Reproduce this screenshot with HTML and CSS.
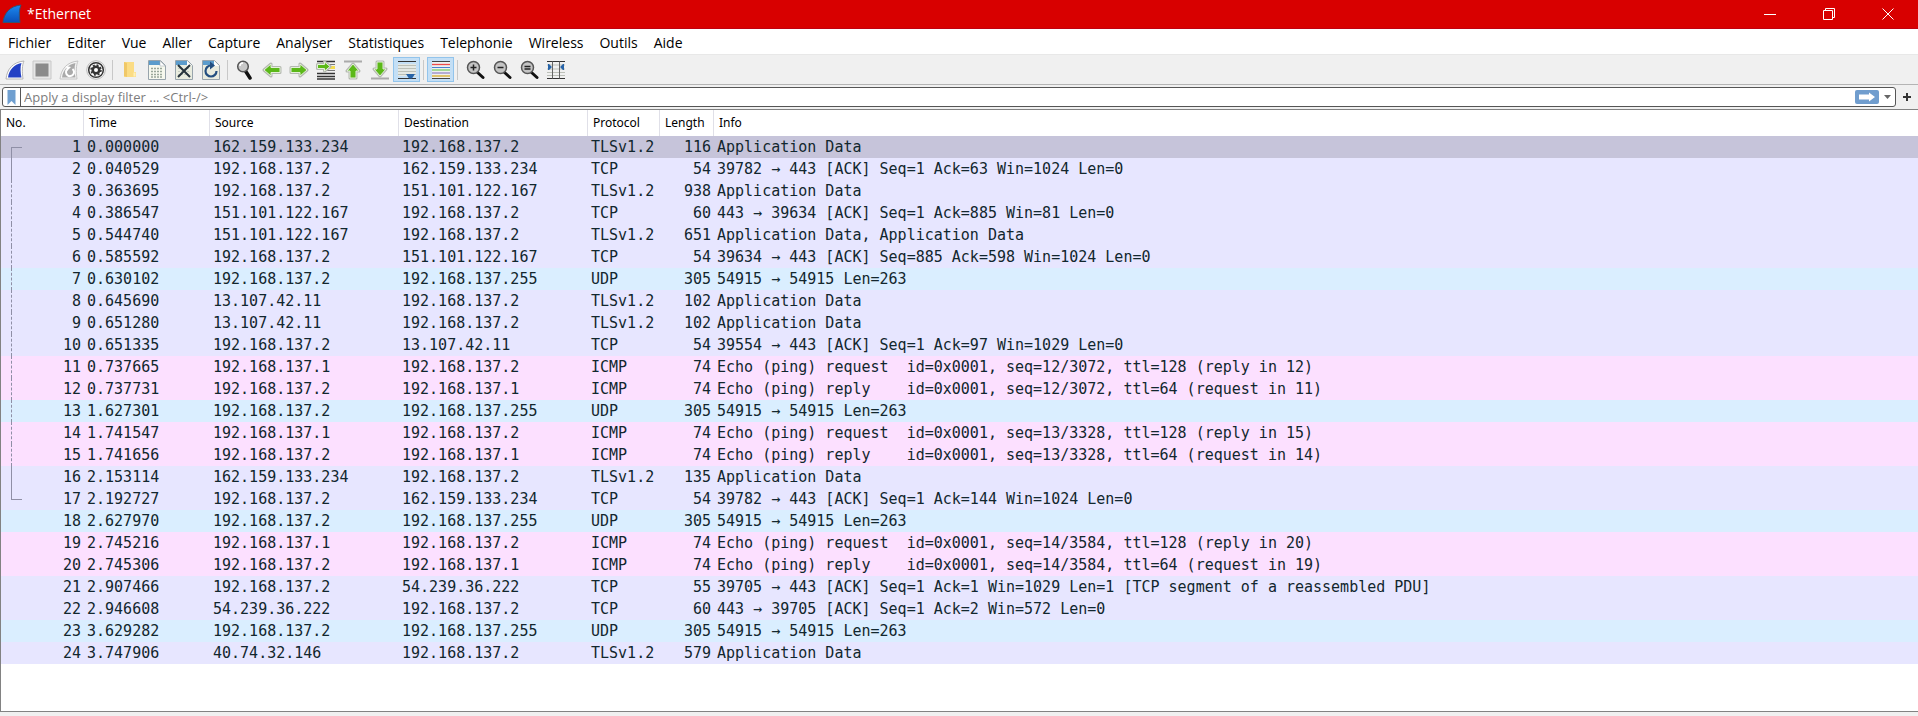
FILE: index.html
```html
<!DOCTYPE html>
<html lang="fr">
<head>
<meta charset="utf-8">
<title>*Ethernet</title>
<link rel="stylesheet" href="styles.css">
</head>
<body>
<div class="window">
<header class="titlebar">
  <svg class="app-icon" viewBox="0 0 20 20"><defs><linearGradient id="fin" x1="0" y1="0" x2="0" y2="1"><stop offset="0" stop-color="#1c8af0"/><stop offset="1" stop-color="#0a4fb8"/></linearGradient></defs><path d="M1 18.500C2 9 8 2 19 1c-2 4-2 11-1 17.500z" fill="url(#fin)" stroke="#39506e"/></svg>
  <h1 class="caption">*Ethernet</h1>
  <div class="win-buttons">
    <button class="win-button" aria-label="Réduire"><svg viewBox="0 0 14 14"><path d="M1 7.500h12"/></svg></button>
    <button class="win-button" aria-label="Restaurer"><svg viewBox="0 0 14 14"><path d="M1.500 3.500h9v9h-9zM3.500 3.500v-2h9v9h-2"/></svg></button>
    <button class="win-button" aria-label="Fermer"><svg viewBox="0 0 14 14"><path d="M1.500 1.500l11 11M12.500 1.500l-11 11"/></svg></button>
  </div>
</header>
<nav class="menubar">
  <button>Fichier</button><button>Editer</button><button>Vue</button><button>Aller</button><button>Capture</button><button>Analyser</button><button>Statistiques</button><button>Telephonie</button><button>Wireless</button><button>Outils</button><button>Aide</button>
</nav>
<div class="toolbar" role="toolbar">
  <button class="tool" aria-label="Démarrer"><svg viewBox="0 0 20 20"><path d="M1 19C2 9 8 2 19 1c-2 4-2 11-1 18z" fill="#fff" stroke="#b4b4b4"/><path d="M3 17.500C4 10 9 4.500 16.500 3c-1.500 4-1 10 0 14.500z" fill="#2340c4"/></svg></button>
  <button class="tool" aria-label="Arrêter"><svg viewBox="0 0 20 20"><path d="M1 1h18v18H1z" fill="#e6e6e6" stroke="#c8c8c8"/><path d="M3.500 3.500h13v13h-13z" fill="#8b8b8b"/></svg></button>
  <button class="tool" aria-label="Redémarrer"><svg viewBox="0 0 20 20"><path d="M1 19C2 9 8 2 19 1c-2 4-2 11-1 18z" fill="#f4f4f4" stroke="#c4c4c4"/><path d="M3 17.500C4 10 9 4.500 16.500 3c-1.500 4-1 10 0 14.500z" fill="#aaa"/><path d="M8 9.500a4 4 0 1 0 5.500-.5" fill="none" stroke="#fff" stroke-width="2"/><path d="M7 6l5 1-4 4z" fill="#fff"/></svg></button>
  <button class="tool" aria-label="Options"><svg viewBox="0 0 20 20"><circle cx="10" cy="10" r="9.300" fill="#f5f5f5" stroke="#bbb"/><circle cx="10" cy="10" r="7.300" fill="#fff" stroke="#333" stroke-width="1.500"/><circle cx="10" cy="10" r="5" fill="none" stroke="#333" stroke-width="1.500" stroke-dasharray="2 1.930"/><circle cx="10" cy="10" r="3.300" fill="#fff" stroke="#333" stroke-width="2.600"/></svg></button>
  <span class="separator"></span>
  <button class="tool" aria-label="Ouvrir"><svg viewBox="0 0 20 20"><path d="M4 2h10v10h2v5H4z" fill="#fbdc84"/><path d="M4 2l3 1v14l-3-1z" fill="#f0c868"/><path d="M13.500 12.500h2v4h-2z" fill="#fff0b8"/></svg></button>
  <button class="tool" aria-label="Enregistrer"><svg viewBox="0 0 20 20"><path d="M1.500.500h12l5 5v14h-17z" fill="#f6f8ee" stroke="#98a4ac"/><path d="M2 1h11v4H2z" fill="#5b9ccc"/><path d="M13 1v5h5z" fill="#fff" stroke="#98a4ac" stroke-width=".5"/><path d="M4 8.500h12M4 11.500h12M4 14.500h12M4 17h12" stroke="#9aa79a" stroke-width="1.500" stroke-dasharray="2 1"/></svg></button>
  <button class="tool" aria-label="Fermer le fichier"><svg viewBox="0 0 20 20"><path d="M1.500.500h12l5 5v14h-17z" fill="#e9ecdf" stroke="#98a4ac"/><path d="M2 1h11v4H2z" fill="#5b9ccc"/><path d="M13 1v5h5z" fill="#fff"/><path d="M4 8.500h12M4 11.500h12M4 14.500h12" stroke="#c4ccc0" stroke-dasharray="2 1"/><path d="M4 5l12 12M16 5l-12 12" stroke="#26333c" stroke-width="2"/></svg></button>
  <button class="tool" aria-label="Recharger"><svg viewBox="0 0 20 20"><path d="M1.500.500h12l5 5v14h-17z" fill="#e9ecdf" stroke="#98a4ac"/><path d="M2 1h11v4H2z" fill="#5b9ccc"/><path d="M13 1v5h5z" fill="#fff"/><path d="M15.500 11a5.500 5.500 0 1 1-5.500-5.500" fill="none" stroke="#234f80" stroke-width="2.200"/><path d="M9 1.500l5 4-5 4z" fill="#234f80"/></svg></button>
  <span class="separator"></span>
  <button class="tool" aria-label="Rechercher"><svg viewBox="0 0 20 20"><path d="M10.500 11l4.500 7" stroke="#111" stroke-width="3.500" stroke-linecap="round"/><circle cx="8" cy="6.500" r="5.300" fill="#c8c8c8" stroke="#555" stroke-width="1.500"/><path d="M5 6a3 3 0 0 1 3-3" stroke="#fff" stroke-width="1.500" fill="none"/></svg></button>
  <button class="tool" aria-label="Précédent"><svg viewBox="0 0 20 20"><path class="arrow-rim" d="M2 10l7-6v3.500h9v5H9V16z"/><path class="arrow" d="M2 10l7-6v3.500h9v5H9V16z"/></svg></button>
  <button class="tool" aria-label="Suivant"><svg viewBox="0 0 20 20"><path class="arrow-rim" d="M18 10l-7-6v3.500H2v5h9V16z"/><path class="arrow" d="M18 10l-7-6v3.500H2v5h9V16z"/></svg></button>
  <button class="tool" aria-label="Aller au paquet"><svg viewBox="0 0 20 20"><path d="M1 1.500h18M1 13.500h18M1 16.500h18M1 19h18" stroke="#333" stroke-width="1.300"/><path d="M10 4.500h9M10 10.500h9" stroke="#777"/><path d="M13 6h6v3h-6z" fill="#f3dc50"/><path class="arrow-rim" d="M14 6.500L8.500 2v2.500h-7v4h7V11z"/><path class="arrow" d="M14 6.500L8.500 2v2.500h-7v4h7V11z"/></svg></button>
  <button class="tool" aria-label="Premier paquet"><svg viewBox="0 0 20 20"><path d="M1 1.500h18" stroke="#aaa" stroke-width="2"/><path class="arrow-rim" d="M10 4l6 7h-3v7H7v-7H4z"/><path class="arrow" d="M10 4l6 7h-3v7H7v-7H4z"/></svg></button>
  <button class="tool" aria-label="Dernier paquet"><svg viewBox="0 0 20 20"><path d="M1 18.500h18" stroke="#aaa" stroke-width="2"/><path class="arrow-rim" d="M10 16l6-7h-3V2H7v7H4z"/><path class="arrow" d="M10 16l6-7h-3V2H7v7H4z"/></svg></button>
  <button class="tool checked" aria-pressed="true" aria-label="Défilement automatique"><svg viewBox="0 0 20 20"><path d="M1 1.500h18M1 18.500h18" stroke="#333"/><path d="M1 4h18v12H1z" fill="#e4e8e4"/><path d="M1 5.500h18M1 8.500h18M1 11.500h18M1 14.500h18" stroke="#bcc0b8"/><path d="M9 14h9l-1 1.500-2 3h-3l-2-3z" fill="#2864a8"/></svg></button>
  <span class="separator"></span>
  <button class="tool checked" aria-pressed="true" aria-label="Colorer"><svg viewBox="0 0 20 20"><path d="M1 1h18v18H1z" fill="#eef0f0"/><path d="M1 1.500h18M1 18.500h18" stroke="#444"/><path d="M1 4.500h18" stroke="#ef4a4a" stroke-width="1.300"/><path d="M1 7.500h18" stroke="#4a80d0"/><path d="M1 10h18" stroke="#58c040"/><path d="M1 13h18" stroke="#7a68b8"/><path d="M1 16h18" stroke="#d8b440" stroke-width="1.500"/></svg></button>
  <span class="separator"></span>
  <button class="tool" aria-label="Zoom avant"><svg viewBox="0 0 20 20"><path d="M12 12l6 5.500" stroke="#111" stroke-width="3" stroke-linecap="round"/><circle cx="8.500" cy="7.500" r="6" fill="#c4c4c4" stroke="#555" stroke-width="1.500"/><path d="M5.500 7.500h6M8.500 4.500v6" stroke="#222" stroke-width="1.500"/></svg></button>
  <button class="tool" aria-label="Zoom arrière"><svg viewBox="0 0 20 20"><path d="M12 12l6 5.500" stroke="#111" stroke-width="3" stroke-linecap="round"/><circle cx="8.500" cy="7.500" r="6" fill="#c4c4c4" stroke="#555" stroke-width="1.500"/><path d="M5.500 7.500h6" stroke="#222" stroke-width="1.500"/></svg></button>
  <button class="tool" aria-label="Taille normale"><svg viewBox="0 0 20 20"><path d="M12 12l6 5.500" stroke="#111" stroke-width="3" stroke-linecap="round"/><circle cx="8.500" cy="7.500" r="6" fill="#c4c4c4" stroke="#555" stroke-width="1.500"/><path d="M5.500 6.500h6M5.500 9h6" stroke="#222" stroke-width="1.600"/></svg></button>
  <button class="tool" aria-label="Ajuster les colonnes"><svg viewBox="0 0 20 20"><path d="M1 1.500h18M1 18.500h18" stroke="#333"/><path d="M1 5h18M1 9h18M1 12.500h18M1 15.500h18" stroke="#bcc0b8"/><path d="M6.500 1.500v17M13.500 1.500v17" stroke="#666"/><path d="M2 4h1l3 3-3 3H2zM18 4h-1l-3 3 3 3h1z" fill="#2864a8"/></svg></button>
</div>
<form class="filterbar">
  <div class="filter-box">
    <button type="button" class="bookmark" aria-label="Signets"><svg viewBox="0 0 9 15"><path d="M.500 0h8v15l-4-4-4 4z" fill="#6f9fd0"/></svg></button>
    <input class="filter-input" type="text" aria-label="Filtre d'affichage" placeholder="Apply a display filter ... &lt;Ctrl-/&gt;" autofocus>
    <button type="button" class="apply" aria-label="Appliquer"><svg viewBox="0 0 24 14"><path d="M4 4.500h10V2.500L20 7l-6 4.500v-2H4z" fill="#fff"/></svg></button>
    <button type="button" class="history" aria-label="Historique"><svg viewBox="0 0 7 4"><path d="M0 0h7L3.500 4z" fill="#666"/></svg></button>
  </div>
  <button type="button" class="add" aria-label="Ajouter"><svg viewBox="0 0 8 8"><path d="M0 4h8M4 0v8" stroke="#333" stroke-width="2"/></svg></button>
</form>
<main class="packets">
<table class="packet-table">
<colgroup><col class="c-no"><col class="c-time"><col class="c-addr"><col class="c-addr"><col class="c-proto"><col class="c-len"><col></colgroup>
<thead><tr><th>No.</th><th>Time</th><th>Source</th><th>Destination</th><th>Protocol</th><th>Length</th><th>Info</th></tr></thead>
<tbody>
<tr class="selected first"><td>1</td><td>0.000000</td><td>162.159.133.234</td><td>192.168.137.2</td><td>TLSv1.2</td><td>116</td><td>Application Data</td></tr>
<tr class="tcp solid"><td>2</td><td>0.040529</td><td>192.168.137.2</td><td>162.159.133.234</td><td>TCP</td><td>54</td><td>39782 → 443 [ACK] Seq=1 Ack=63 Win=1024 Len=0</td></tr>
<tr class="tcp dashed"><td>3</td><td>0.363695</td><td>192.168.137.2</td><td>151.101.122.167</td><td>TLSv1.2</td><td>938</td><td>Application Data</td></tr>
<tr class="tcp dashed"><td>4</td><td>0.386547</td><td>151.101.122.167</td><td>192.168.137.2</td><td>TCP</td><td>60</td><td>443 → 39634 [ACK] Seq=1 Ack=885 Win=81 Len=0</td></tr>
<tr class="tcp dashed"><td>5</td><td>0.544740</td><td>151.101.122.167</td><td>192.168.137.2</td><td>TLSv1.2</td><td>651</td><td>Application Data, Application Data</td></tr>
<tr class="tcp dashed"><td>6</td><td>0.585592</td><td>192.168.137.2</td><td>151.101.122.167</td><td>TCP</td><td>54</td><td>39634 → 443 [ACK] Seq=885 Ack=598 Win=1024 Len=0</td></tr>
<tr class="udp dashed"><td>7</td><td>0.630102</td><td>192.168.137.2</td><td>192.168.137.255</td><td>UDP</td><td>305</td><td>54915 → 54915 Len=263</td></tr>
<tr class="tcp dashed"><td>8</td><td>0.645690</td><td>13.107.42.11</td><td>192.168.137.2</td><td>TLSv1.2</td><td>102</td><td>Application Data</td></tr>
<tr class="tcp dashed"><td>9</td><td>0.651280</td><td>13.107.42.11</td><td>192.168.137.2</td><td>TLSv1.2</td><td>102</td><td>Application Data</td></tr>
<tr class="tcp dashed"><td>10</td><td>0.651335</td><td>192.168.137.2</td><td>13.107.42.11</td><td>TCP</td><td>54</td><td>39554 → 443 [ACK] Seq=1 Ack=97 Win=1029 Len=0</td></tr>
<tr class="icmp dashed"><td>11</td><td>0.737665</td><td>192.168.137.1</td><td>192.168.137.2</td><td>ICMP</td><td>74</td><td>Echo (ping) request  id=0x0001, seq=12/3072, ttl=128 (reply in 12)</td></tr>
<tr class="icmp dashed"><td>12</td><td>0.737731</td><td>192.168.137.2</td><td>192.168.137.1</td><td>ICMP</td><td>74</td><td>Echo (ping) reply    id=0x0001, seq=12/3072, ttl=64 (request in 11)</td></tr>
<tr class="udp dashed"><td>13</td><td>1.627301</td><td>192.168.137.2</td><td>192.168.137.255</td><td>UDP</td><td>305</td><td>54915 → 54915 Len=263</td></tr>
<tr class="icmp dashed"><td>14</td><td>1.741547</td><td>192.168.137.1</td><td>192.168.137.2</td><td>ICMP</td><td>74</td><td>Echo (ping) request  id=0x0001, seq=13/3328, ttl=128 (reply in 15)</td></tr>
<tr class="icmp dashed"><td>15</td><td>1.741656</td><td>192.168.137.2</td><td>192.168.137.1</td><td>ICMP</td><td>74</td><td>Echo (ping) reply    id=0x0001, seq=13/3328, ttl=64 (request in 14)</td></tr>
<tr class="tcp solid"><td>16</td><td>2.153114</td><td>162.159.133.234</td><td>192.168.137.2</td><td>TLSv1.2</td><td>135</td><td>Application Data</td></tr>
<tr class="tcp last"><td>17</td><td>2.192727</td><td>192.168.137.2</td><td>162.159.133.234</td><td>TCP</td><td>54</td><td>39782 → 443 [ACK] Seq=1 Ack=144 Win=1024 Len=0</td></tr>
<tr class="udp"><td>18</td><td>2.627970</td><td>192.168.137.2</td><td>192.168.137.255</td><td>UDP</td><td>305</td><td>54915 → 54915 Len=263</td></tr>
<tr class="icmp"><td>19</td><td>2.745216</td><td>192.168.137.1</td><td>192.168.137.2</td><td>ICMP</td><td>74</td><td>Echo (ping) request  id=0x0001, seq=14/3584, ttl=128 (reply in 20)</td></tr>
<tr class="icmp"><td>20</td><td>2.745306</td><td>192.168.137.2</td><td>192.168.137.1</td><td>ICMP</td><td>74</td><td>Echo (ping) reply    id=0x0001, seq=14/3584, ttl=64 (request in 19)</td></tr>
<tr class="tcp"><td>21</td><td>2.907466</td><td>192.168.137.2</td><td>54.239.36.222</td><td>TCP</td><td>55</td><td>39705 → 443 [ACK] Seq=1 Ack=1 Win=1029 Len=1 [TCP segment of a reassembled PDU]</td></tr>
<tr class="tcp"><td>22</td><td>2.946608</td><td>54.239.36.222</td><td>192.168.137.2</td><td>TCP</td><td>60</td><td>443 → 39705 [ACK] Seq=1 Ack=2 Win=572 Len=0</td></tr>
<tr class="udp"><td>23</td><td>3.629282</td><td>192.168.137.2</td><td>192.168.137.255</td><td>UDP</td><td>305</td><td>54915 → 54915 Len=263</td></tr>
<tr class="tcp"><td>24</td><td>3.747906</td><td>40.74.32.146</td><td>192.168.137.2</td><td>TLSv1.2</td><td>579</td><td>Application Data</td></tr>
</tbody>
</table>
</main>
</div>
</body>
</html>
```

FILE: styles.css
```css
* { box-sizing: border-box; }
body { margin: 0; background: #f0f0f0; color: #000; font-family: "Open Sans", "Noto Sans", sans-serif; overflow: hidden; }
button { margin: 0; padding: 0; border: 0; background: none; font: inherit; color: inherit; }
svg { display: block; }
.window { display: flex; flex-direction: column; height: 100vh; padding-bottom: 4px; }

.titlebar { display: flex; align-items: center; flex: none; height: 29px; padding: 0 1px 0 2px; background: #d80000; border-bottom: 1px solid #c00010; color: #fff; }
.app-icon { width: 20px; height: 20px; }
.caption { margin: 0 auto 0 5px; font-size: 14px; font-weight: 400; line-height: 20px; }
.win-buttons { display: flex; }
.win-button { display: flex; align-items: center; justify-content: center; width: 59px; height: 28px; }
.win-button svg { width: 14px; height: 14px; fill: none; stroke: #fff; }

.menubar { display: flex; align-items: center; flex: none; gap: 16px; height: 26px; padding: 2px 0 0 8px; background: #fff; border-bottom: 1px solid #e8e8e8; font-size: 14px; line-height: 20px; }

.toolbar { display: flex; align-items: center; flex: none; height: 30px; padding-left: 1px; border-bottom: 1px solid #b4b4b4; }
.tool { display: flex; align-items: center; justify-content: center; width: 27px; height: 25px; border: 1px solid transparent; }
.tool svg { width: 20px; height: 20px; }
.arrow-rim { fill: #fff; stroke: #b4b8b0; stroke-width: 3; stroke-linejoin: round; }
.arrow { fill: #5bb818; stroke: #e4f0da; stroke-width: 1; }
.checked { background: #c4dff5; border-color: #92c4ec; }
.separator { width: 1px; height: 20px; margin: 0 3px; background: #c8c8c8; }

.filterbar { display: flex; align-items: center; flex: none; height: 24px; padding: 0 7px 0 2px; gap: 7px; }
.filter-box { display: flex; align-items: center; flex: 1; height: 20px; background: #fff; border: 1px solid #555; border-radius: 3px; }
.bookmark { display: flex; align-items: center; justify-content: center; width: 18px; height: 18px; border-right: 1px solid #555; }
.bookmark svg { width: 9px; height: 15px; }
.filter-input { flex: 1; height: 18px; padding: 0 0 0 3px; border: 0; outline: 0; background: none; font: 13px/18px "Open Sans", "Noto Sans", sans-serif; }
.filter-input::placeholder { color: #7c7c7c; opacity: 1; }
.apply { width: 24px; height: 14px; border-radius: 2px; background: #709dce; }
.history { display: flex; align-items: center; justify-content: center; width: 16px; height: 18px; }
.history svg { width: 7px; height: 4px; }
.add svg { width: 8px; height: 8px; }

.packets { flex: 1; min-height: 0; overflow: hidden; background: #fff; border: 1px solid #828282; border-right: 0; }
.packet-table { width: 100%; table-layout: fixed; border-collapse: separate; border-spacing: 0; }
.c-no { width: 83px; }
.c-time { width: 126px; }
.c-addr { width: 189px; }
.c-proto { width: 72px; }
.c-len { width: 54px; }
th { height: 26px; padding: 0 0 0 5px; border-right: 1px solid #e0e0e8; font: 12px/26px "Noto Sans", sans-serif; text-align: left; }
th:last-child { border-right: 0; }
td { height: 22px; padding: 0 3px; color: #12272e; font: 15px/22px "DejaVu Sans Mono", monospace; white-space: pre; }
td:nth-child(1), td:nth-child(6) { text-align: right; }
.tcp { background: #e7e6ff; }
.udp { background: #daeeff; }
.icmp { background: #fce0ff; }
.selected { background: #c6c4da; }

/* conversation bracket beside the packet numbers */
td:first-child { position: relative; }
.first td:first-child::before, .solid td:first-child::before, .dashed td:first-child::before, .last td:first-child::before { content: ""; position: absolute; left: 10px; top: 0; bottom: 0; width: 10px; border-left: 1px solid #8f8fa6; }
.dashed td:first-child::before { border-left-style: dashed; }
.first td:first-child::before { top: 11px; border-top: 1px solid #8f8fa6; }
.last td:first-child::before { bottom: 10px; border-bottom: 1px solid #8f8fa6; }
```
